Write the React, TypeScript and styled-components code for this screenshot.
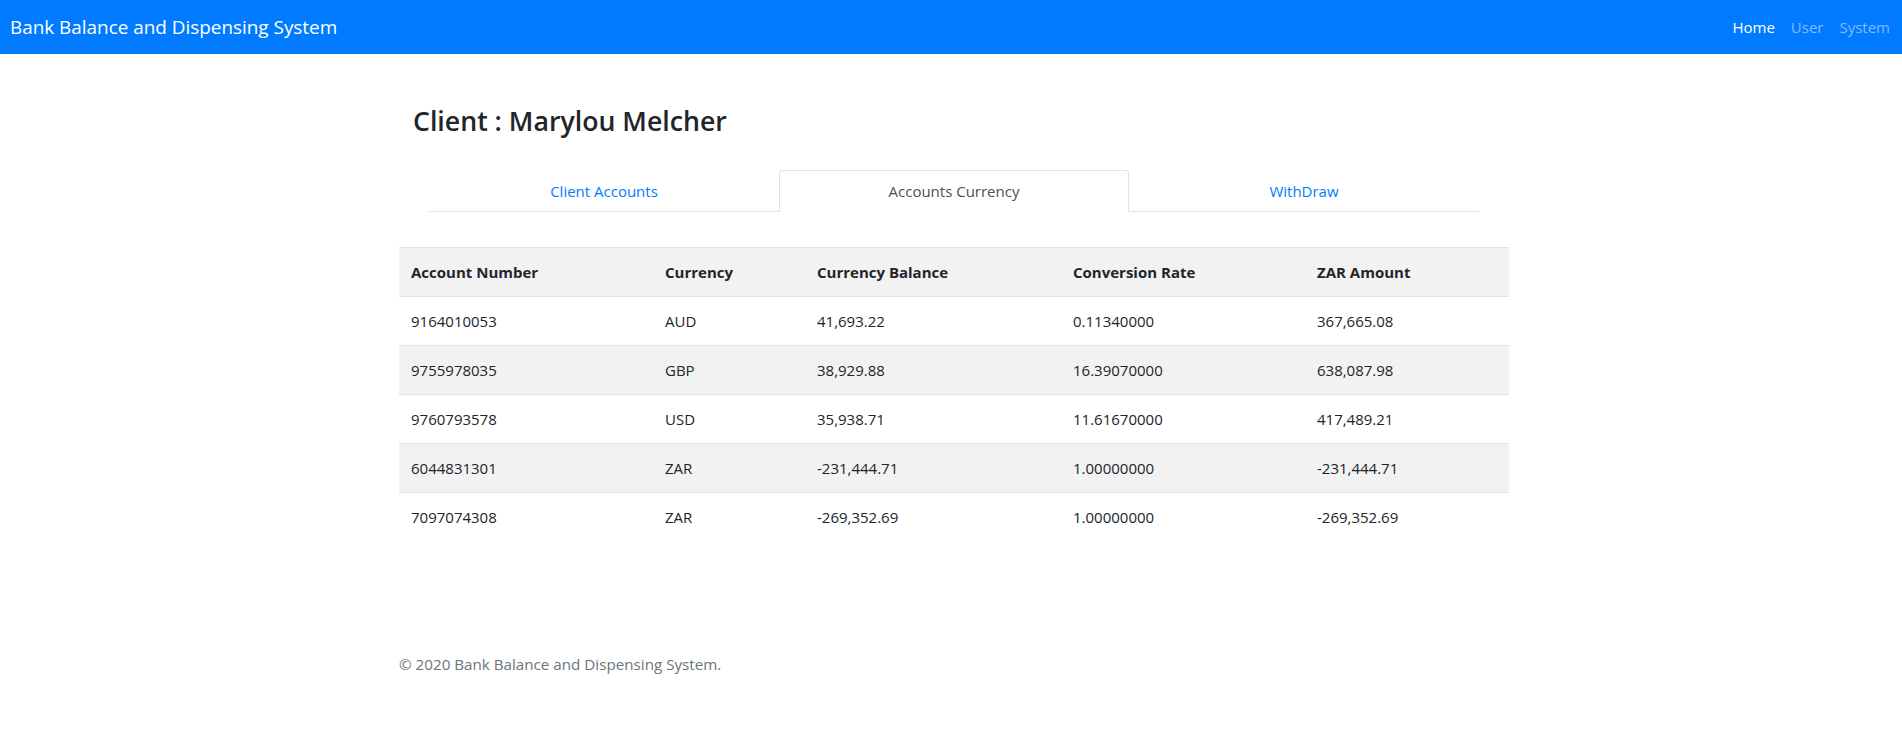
import React from "react";
import styled, { createGlobalStyle } from "styled-components";

const GlobalStyle = createGlobalStyle`
  html, body { margin: 0; padding: 0; }
  body {
    font-family: "Open Sans", "Noto Sans", "Liberation Sans", sans-serif;
    font-size: 16px;
    line-height: 1.5;
    color: #212529;
    background: #ffffff;
  }
  * { box-sizing: border-box; }
`;

const Page = styled.div`
  min-height: 740px;
  display: flex;
  flex-direction: column;
`;

const NavBar = styled.header`
  height: 54px;
  background: #007bff;
  display: flex;
  align-items: center;
  justify-content: space-between;
  padding: 0 4px 0 10px;
`;

const Brand = styled.a`
  color: #ffffff;
  font-size: 18.9px;
  line-height: 30px;
  text-decoration: none;
  white-space: nowrap;
`;

const NavList = styled.nav`
  display: flex;
  align-items: center;
`;

const NavLink = styled.a<{ $active?: boolean }>`
  padding: 0 8px;
  font-size: 15px;
  line-height: 24px;
  color: ${(p) => (p.$active ? "#ffffff" : "rgba(255,255,255,0.5)")};
  text-decoration: none;
`;

const Container = styled.main`
  width: 1110px;
  margin: 0 0 0 calc(50% - 552px);
  display: flex;
  flex-direction: column;
`;

const Title = styled.h3`
  margin: 50px 0 0 0;
  padding-left: 14px;
  font-size: 26.7px;
  line-height: 34px;
  font-weight: 600;
  color: #212529;
`;

const Tabs = styled.ul`
  list-style: none;
  margin: 32px 0 0 30px;
  padding: 0;
  width: 1050px;
  display: grid;
  grid-template-columns: repeat(3, 1fr);
  border-bottom: 1px solid #dee2e6;
`;

const Tab = styled.li<{ $active?: boolean }>`
  margin-bottom: -1px;
  height: 42px;
  display: flex;
  align-items: center;
  justify-content: center;
  font-size: 15px;
  color: ${(p) => (p.$active ? "#495057" : "#007bff")};
  background: ${(p) => (p.$active ? "#ffffff" : "transparent")};
  border: 1px solid ${(p) => (p.$active ? "#dee2e6" : "transparent")};
  border-bottom-color: ${(p) => (p.$active ? "#ffffff" : "transparent")};
  border-radius: 4px 4px 0 0;
`;

const Table = styled.table`
  margin-top: 35px;
  width: 1110px;
  border-collapse: collapse;
  table-layout: fixed;
  font-size: 15px;
`;

const Row = styled.tr<{ $shaded?: boolean }>`
  background: ${(p) => (p.$shaded ? "#f2f2f2" : "#ffffff")};
`;

const HeadCell = styled.th`
  text-align: left;
  font-weight: 700;
  padding: 12px 12px;
  line-height: 24px;
  border-top: 1px solid #dee2e6;
`;

const Cell = styled.td`
  padding: 12px 12px;
  line-height: 24px;
  border-top: 1px solid #dee2e6;
`;

const Footer = styled.footer`
  width: 1110px;
  margin: 111px 0 0 calc(50% - 552px);
  font-size: 15.2px;
  line-height: 24px;
  color: #6c757d;
`;

const rows = [
  ["9164010053", "AUD", "41,693.22", "0.11340000", "367,665.08"],
  ["9755978035", "GBP", "38,929.88", "16.39070000", "638,087.98"],
  ["9760793578", "USD", "35,938.71", "11.61670000", "417,489.21"],
  ["6044831301", "ZAR", "-231,444.71", "1.00000000", "-231,444.71"],
  ["7097074308", "ZAR", "-269,352.69", "1.00000000", "-269,352.69"],
];

const widths = [254, 152, 256, 244, 204];
const heads = ["Account Number", "Currency", "Currency Balance", "Conversion Rate", "ZAR Amount"];

export default function App() {
  return (
    <Page>
      <GlobalStyle />
      <NavBar>
        <Brand>Bank Balance and Dispensing System</Brand>
        <NavList>
          <NavLink $active>Home</NavLink>
          <NavLink>User</NavLink>
          <NavLink>System</NavLink>
        </NavList>
      </NavBar>
      <Container>
        <Title>Client : Marylou Melcher</Title>
        <Tabs>
          <Tab>Client Accounts</Tab>
          <Tab $active>Accounts Currency</Tab>
          <Tab>WithDraw</Tab>
        </Tabs>
        <Table>
          <colgroup>
            {widths.map((w, i) => (
              <col key={i} style={{ width: w }} />
            ))}
          </colgroup>
          <thead>
            <Row $shaded>
              {heads.map((h) => (
                <HeadCell key={h}>{h}</HeadCell>
              ))}
            </Row>
          </thead>
          <tbody>
            {rows.map((r, i) => (
              <Row key={r[0]} $shaded={i % 2 === 1}>
                {r.map((c, j) => (
                  <Cell key={j}>{c}</Cell>
                ))}
              </Row>
            ))}
          </tbody>
        </Table>
      </Container>
      <Footer>© 2020 Bank Balance and Dispensing System.</Footer>
    </Page>
  );
}
